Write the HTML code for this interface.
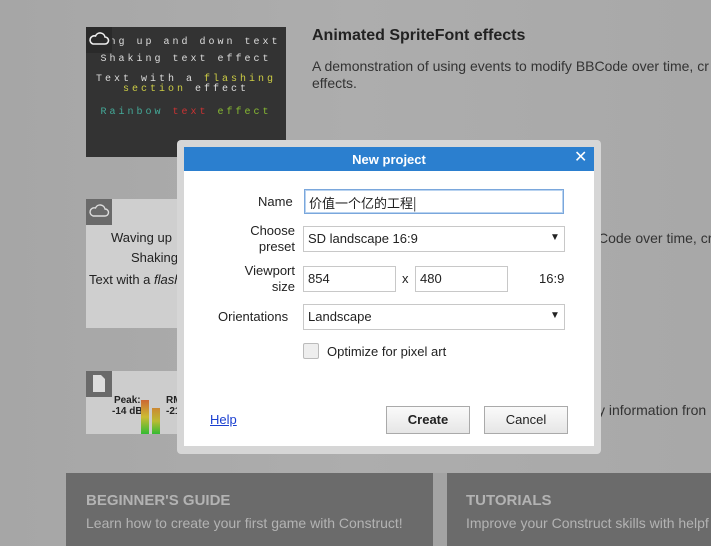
<!DOCTYPE html>
<html><head><meta charset="utf-8"><style>
body{margin:0;width:711px;height:546px;overflow:hidden;background:#a8a8a8;font-family:"Segoe UI","Liberation Sans","Noto Sans CJK SC",sans-serif;position:relative;color:#333}
.a{position:absolute}
</style></head><body>
<div class="a" style="left:0;top:0;width:711px;height:546px;background:linear-gradient(90deg,#a6a6a6,#adadad 50%,#a8a8a8)"></div>
<div class="a" style="left:86px;top:27px;width:200px;height:130px;background:#333;font-family:'Liberation Mono',monospace;font-size:10px;color:#ddd;text-align:center;letter-spacing:3px">
<div style="margin-top:10px">ving up and down text</div>
<div style="margin-top:6px">Shaking text effect</div>
<div style="margin-top:10px;line-height:10px">Text with a <span style="color:#cc4">flashing</span><br><span style="color:#cc4">section</span> effect</div>
<div style="margin-top:12px;color:#4a9"><span>Rainbow </span><span style="color:#c33">text</span> <span style="color:#8b3">effect</span></div>
</div>
<div class="a" style="left:86px;top:27px;width:26px;height:26px;background:#2a2a2a"></div>
<svg class="a" style="left:88px;top:31px" width="22" height="16"><path d="M5 13h12a3.5 3.5 0 0 0 0-7 5 5 0 0 0-9.5-1A4 4 0 0 0 5 13z" fill="none" stroke="#eee" stroke-width="1.6"/></svg>
<div class="a" style="left:312px;top:27px;font-size:16px;font-weight:bold;color:#222">Animated SpriteFont effects</div>
<div class="a" style="left:312px;top:58px;font-size:14px;line-height:17px;color:#333;width:420px;white-space:nowrap">A demonstration of using events to modify BBCode over time, cr<br>effects.</div>
<div class="a" style="left:86px;top:199px;width:100px;height:129px;background:#cfcfcf;font-family:'Liberation Sans',sans-serif;font-size:13px;color:#222;overflow:hidden;white-space:nowrap">
<div class="a" style="left:25px;top:31px">Waving up</div>
<div class="a" style="left:45px;top:51px">Shaking</div>
<div class="a" style="left:3px;top:73px">Text with a <i>flash</i></div>
</div>
<div class="a" style="left:86px;top:199px;width:26px;height:26px;background:#6a6a6a"></div>
<svg class="a" style="left:88px;top:203px" width="22" height="16"><path d="M5 13h12a3.5 3.5 0 0 0 0-7 5 5 0 0 0-9.5-1A4 4 0 0 0 5 13z" fill="none" stroke="#ddd" stroke-width="1.4"/></svg>
<div class="a" style="left:598px;top:230px;font-size:14px;white-space:nowrap">Code over time, cr</div>
<div class="a" style="left:86px;top:371px;width:100px;height:63px;background:#cdcdcd;font-family:'Liberation Sans',sans-serif;font-size:10px;font-weight:bold;color:#222;overflow:hidden">
<div class="a" style="left:26px;top:24px;text-align:center;line-height:11px">Peak:<br>-14 dB</div>
<div class="a" style="left:80px;top:24px;line-height:11px">RM<br>-21</div>
<div class="a" style="left:55px;top:29px;width:8px;height:34px;background:linear-gradient(#c63,#cb3,#3b3)"></div>
<div class="a" style="left:66px;top:37px;width:8px;height:26px;background:linear-gradient(#c83,#bb3,#3b3)"></div>
</div>
<div class="a" style="left:86px;top:371px;width:26px;height:26px;background:#6a6a6a"></div>
<svg class="a" style="left:91px;top:374px" width="16" height="20"><path d="M2 1h8l4 4v13H2z" fill="#ddd"/></svg>
<div class="a" style="left:598px;top:402px;font-size:14px;white-space:nowrap">y information fron</div>
<div class="a" style="left:66px;top:473px;width:367px;height:73px;background:#6b6b6b"></div>
<div class="a" style="left:433px;top:473px;width:14px;height:73px;background:#a3a3a3"></div>
<div class="a" style="left:447px;top:473px;width:264px;height:73px;background:#6b6b6b"></div>
<div class="a" style="left:86px;top:492px;font-size:15px;font-weight:bold;color:#b3b3b3">BEGINNER'S GUIDE</div>
<div class="a" style="left:86px;top:515px;font-size:14px;color:#b3b3b3">Learn how to create your first game with Construct!</div>
<div class="a" style="left:466px;top:492px;font-size:15px;font-weight:bold;color:#b3b3b3">TUTORIALS</div>
<div class="a" style="left:466px;top:515px;font-size:14px;color:#b3b3b3;white-space:nowrap">Improve your Construct skills with helpf</div>
<div class="a" style="left:177px;top:140px;width:424px;height:314px;background:#d6d6d6;border-radius:4px"></div>
<div class="a" style="left:184px;top:147px;width:410px;height:299px;background:#fff"></div>
<div class="a" style="left:184px;top:147px;width:410px;height:24px;background:#2b7fcf;color:#fff;font-size:13px;font-weight:bold;text-align:center;line-height:25px">New project</div>
<div class="a" style="left:574px;top:148px;color:#fff;font-size:16px;line-height:20px">✕</div>
<div style="font-size:13px;color:#222">
<div class="a" style="left:258px;top:194px">Name</div>
<div class="a" style="left:304px;top:189px;width:258px;height:23px;border:1px solid #7aa7dc;box-shadow:0 0 0 1px #b9d3f0 inset"></div>
<div class="a" style="left:309px;top:193px;font-family:'Noto Sans CJK SC',sans-serif;font-size:13px">价值一个亿的工程|</div>
<div class="a" style="left:220px;top:223px;width:75px;text-align:right;line-height:16px">Choose<br>preset</div>
<div class="a" style="left:303px;top:226px;width:260px;height:24px;border:1px solid #c8c8c8"></div>
<div class="a" style="left:308px;top:231px">SD landscape 16:9</div>
<div class="a" style="left:550px;top:232px;font-size:10px">▼</div>
<div class="a" style="left:220px;top:263px;width:75px;text-align:right;line-height:16px">Viewport<br>size</div>
<div class="a" style="left:303px;top:266px;width:91px;height:24px;border:1px solid #c8c8c8"></div>
<div class="a" style="left:308px;top:271px">854</div>
<div class="a" style="left:402px;top:271px">x</div>
<div class="a" style="left:415px;top:266px;width:91px;height:24px;border:1px solid #c8c8c8"></div>
<div class="a" style="left:420px;top:271px">480</div>
<div class="a" style="left:539px;top:271px">16:9</div>
<div class="a" style="left:218px;top:309px">Orientations</div>
<div class="a" style="left:303px;top:304px;width:260px;height:24px;border:1px solid #c8c8c8"></div>
<div class="a" style="left:308px;top:309px">Landscape</div>
<div class="a" style="left:550px;top:310px;font-size:10px">▼</div>
<div class="a" style="left:303px;top:343px;width:14px;height:14px;border:1px solid #bbb;background:#eee;border-radius:2px"></div>
<div class="a" style="left:327px;top:344px">Optimize for pixel art</div>
<div class="a" style="left:210px;top:412px;color:#1a3fd0;text-decoration:underline">Help</div>
<div class="a" style="left:386px;top:406px;width:82px;height:26px;border:1px solid #aaa;background:linear-gradient(#fafafa,#e6e6e6);text-align:center;line-height:26px;font-weight:bold">Create</div>
<div class="a" style="left:484px;top:406px;width:82px;height:26px;border:1px solid #aaa;background:linear-gradient(#fafafa,#e6e6e6);text-align:center;line-height:26px">Cancel</div>
</div>
</body></html>
